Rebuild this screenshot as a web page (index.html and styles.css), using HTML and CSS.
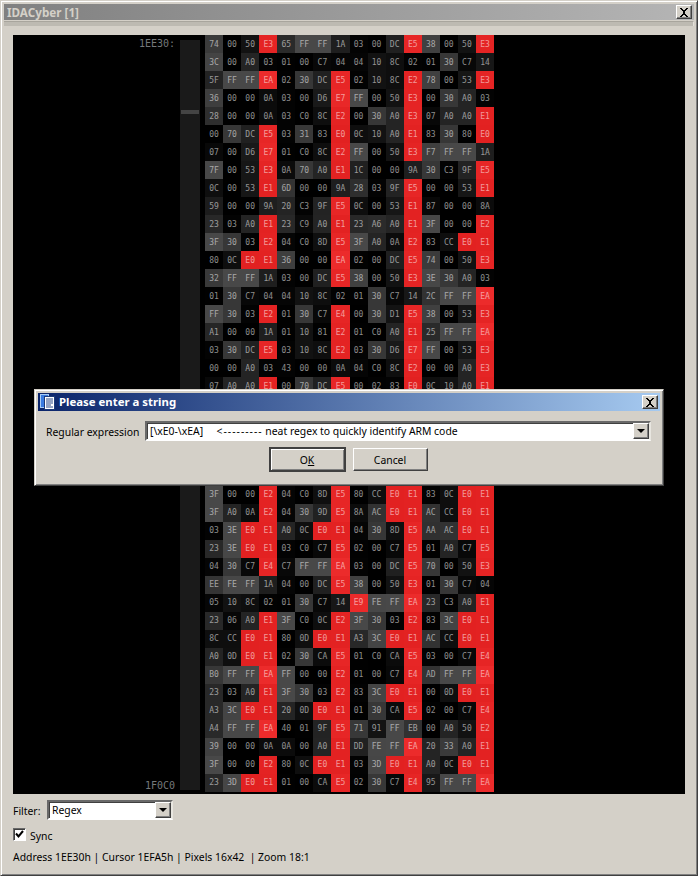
FILE: index.html
```html
<!DOCTYPE html>
<html lang="en">
  <head>
    <meta charset="UTF-8" />
    <title>IDACyber [1]</title>
    <link rel="stylesheet" href="styles.css">
  </head>
  <body>
    <div class="window">
      <div class="titlebar">
        <span class="title">IDACyber [1]</span>
        <span class="closebtn">
          <svg width="10" height="9" viewBox="0 0 10 9"><path d="M1 0h2v1h1v1h2V1h1V0h2v1H8v1H7v1H6v3h1v1h1v1h1v1H7V8H6V7H4v1H3v1H1V8h1V7h1V6h1V3H3V2H2V1H1z"/></svg>
        </span>
      </div>
      <div class="tabstrip"></div>

      <div class="content">
        <div class="canvas">
          <div class="labels">
            <span>1EE30:</span>
            <span>1F0C0</span>
          </div>
          <div class="strip"><div class="handle"></div></div>
          <div id="hexgrid" class="hexgrid"></div>
        </div>

        <div class="filter-row">
          <label class="filter-label">Filter:</label>
          <div class="combo combo-small">
            <span class="combo-text">Regex</span>
            <span class="combo-btn"><i class="arrow"></i></span>
          </div>
        </div>

        <div class="sync-row">
          <span class="checkbox">
            <svg width="9" height="9" viewBox="0 0 9 9"><path d="M1 3.5 3.5 6.5 8 1" fill="none" stroke="#000" stroke-width="2"/></svg>
          </span>
          <label class="sync-label">Sync</label>
        </div>

        <div class="status">Address 1EE30h | Cursor 1EFA5h | Pixels 16x42  | Zoom 18:1</div>
      </div>

      <div class="dialog">
        <div class="dialog-title">
          <svg class="dialog-icon" width="16" height="16" viewBox="0 0 16 16">
            <rect x="0.5" y="0.5" width="8" height="13" fill="#3a7be0" stroke="#a8ccf4"/>
            <rect x="4.5" y="2.5" width="10" height="13" fill="#fff" stroke="#1c3a78"/>
            <path d="M6 5h7M6 7h7M6 9h7M6 11h5M6 13h7" stroke="#2c4a88"/>
          </svg>
          <span class="dialog-caption">Please enter a string</span>
          <span class="closebtn closebtn-dialog">
            <svg width="10" height="9" viewBox="0 0 10 9"><path d="M1 0h2v1h1v1h2V1h1V0h2v1H8v1H7v1H6v3h1v1h1v1h1v1H7V8H6V7H4v1H3v1H1V8h1V7h1V6h1V3H3V2H2V1H1z"/></svg>
          </span>
        </div>
        <div class="dialog-row">
          <label class="dialog-label">Regular expression</label>
          <div class="combo combo-wide">
            <span class="combo-text">[\xE0-\xEA]     <span class="dashes">&lt;---------</span> neat regex to quickly identify ARM code</span>
            <span class="combo-btn"><i class="arrow"></i></span>
          </div>
        </div>
        <div class="dialog-buttons">
          <button class="btn btn-default">O<u>K</u></button>
          <button class="btn">Cancel</button>
        </div>
      </div>
    </div>

    <script>
      var rows = [
        "74 00 50 E3 65 FF FF 1A 03 00 DC E5 38 00 50 E3",
        "3C 00 A0 03 01 00 C7 04 04 10 8C 02 01 30 C7 14",
        "5F FF FF EA 02 30 DC E5 02 10 8C E2 78 00 53 E3",
        "36 00 00 0A 03 00 D6 E7 FF 00 50 E3 00 30 A0 03",
        "28 00 00 0A 03 C0 8C E2 00 30 A0 E3 07 A0 A0 E1",
        "00 70 DC E5 03 31 83 E0 0C 10 A0 E1 83 30 80 E0",
        "07 00 D6 E7 01 C0 8C E2 FF 00 50 E3 F7 FF FF 1A",
        "7F 00 53 E3 0A 70 A0 E1 1C 00 00 9A 30 C3 9F E5",
        "0C 00 53 E1 6D 00 00 9A 28 03 9F E5 00 00 53 E1",
        "59 00 00 9A 20 C3 9F E5 0C 00 53 E1 87 00 00 8A",
        "23 03 A0 E1 23 C9 A0 E1 23 A6 A0 E1 3F 00 00 E2",
        "3F 30 03 E2 04 C0 8D E5 3F A0 0A E2 83 CC E0 E1",
        "80 0C E0 E1 36 00 00 EA 02 00 DC E5 74 00 50 E3",
        "32 FF FF 1A 03 00 DC E5 38 00 50 E3 3E 30 A0 03",
        "01 30 C7 04 04 10 8C 02 01 30 C7 14 2C FF FF EA",
        "FF 30 03 E2 01 30 C7 E4 00 30 D1 E5 38 00 53 E3",
        "A1 00 00 1A 01 10 81 E2 01 C0 A0 E1 25 FF FF EA",
        "03 30 DC E5 03 10 8C E2 03 30 D6 E7 FF 00 53 E3",
        "00 00 A0 03 43 00 00 0A 04 C0 8C E2 00 00 A0 E3",
        "07 A0 A0 E1 00 70 DC E5 00 02 83 E0 0C 10 A0 E1",
        "83 30 80 E0 07 00 D6 E7 01 C0 8C E2 FF 00 53 E3",
        "00 00 A0 03 04 C0 8C E2 00 30 A0 E3 3F 00 00 E2",
        "23 03 A0 E1 23 C9 A0 E1 3F 30 03 E2 83 CC E0 E1",
        "04 C0 8D E5 80 0C E0 E1 02 00 DC E5 74 00 50 E3",
        "23 A6 A0 E1 3F A0 0A E2 00 30 D1 E5 38 00 53 E3",
        "3F 00 00 E2 04 C0 8D E5 80 CC E0 E1 83 0C E0 E1",
        "3F A0 0A E2 04 30 9D E5 8A AC E0 E1 AC CC E0 E1",
        "03 3E E0 E1 A0 0C E0 E1 04 30 8D E5 AA AC E0 E1",
        "23 3E E0 E1 03 C0 C7 E5 02 00 C7 E5 01 A0 C7 E5",
        "04 30 C7 E4 C7 FF FF EA 03 00 DC E5 70 00 50 E3",
        "EE FE FF 1A 04 00 DC E5 38 00 50 E3 01 30 C7 04",
        "05 10 8C 02 01 30 C7 14 E9 FE FF EA 23 C3 A0 E1",
        "23 06 A0 E1 3F C0 0C E2 3F 30 03 E2 83 3C E0 E1",
        "8C CC E0 E1 80 0D E0 E1 A3 3C E0 E1 AC CC E0 E1",
        "A0 0D E0 E1 02 30 CA E5 01 C0 CA E5 03 00 C7 E4",
        "B0 FF FF EA FF 00 00 E2 01 00 C7 E4 AD FF FF EA",
        "23 03 A0 E1 3F 30 03 E2 83 3C E0 E1 00 0D E0 E1",
        "A3 3C E0 E1 20 0D E0 E1 01 30 CA E5 02 00 C7 E4",
        "A4 FF FF EA 40 01 9F E5 71 91 FF EB 00 A0 50 E2",
        "39 00 00 0A 0A 00 A0 E1 DD FE FF EA 20 33 A0 E1",
        "3F 00 00 E2 80 0C E0 E1 03 3D E0 E1 A0 0C E0 E1",
        "23 3D E0 E1 01 00 CA E5 02 30 C7 E4 95 FF FF EA"
      ];

      var grid = document.getElementById("hexgrid");

      // gray level comes from the low 6 bits, regex matches (E0-EA) go red
      rows.forEach(function (row) {
        row.split(" ").forEach(function (hex) {
          var value = parseInt(hex, 16);
          var cell = document.createElement("div");
          cell.className = "cell";
          cell.textContent = hex;
          if (value >= 0xe0 && value <= 0xea) {
            var step = value - 0xe0;
            var g = 33 + step;
            cell.style.background = "rgb(" + (226 + step) + "," + g + "," + g + ")";
          } else {
            var c = Math.round((value & 0x3f) * 1.14);
            cell.style.background = "rgb(" + c + "," + c + "," + c + ")";
          }
          grid.appendChild(cell);
        });
      });
    </script>
  </body>
</html>
```

FILE: styles.css
```css
html,
body {
  margin: 0;
  padding: 0;
  background-color: #d4d0c8;
}

body {
  width: 698px;
  height: 876px;
  overflow: hidden;
  font-family: "Noto Sans", sans-serif;
  font-size: 10.4px;
  color: #000;
}

label {
  display: block;
}

.window {
  position: relative;
  box-sizing: border-box;
  width: 698px;
  height: 876px;
  padding: 3px;
  border: 1px solid;
  border-color: #d4d0c8 #404040 #404040 #d4d0c8;
  box-shadow: inset 1px 1px 0 #fff, inset -1px -1px 0 #808080;
}

.titlebar {
  display: flex;
  align-items: center;
  justify-content: space-between;
  height: 16px;
  padding: 0 2px 0 3px;
  background: linear-gradient(to right, #808080, #b5b5b5);
}

.title {
  margin-top: -1px;
  font-weight: bold;
  font-size: 11.7px;
  color: #d4d0c8;
}

.closebtn {
  display: flex;
  align-items: center;
  justify-content: center;
  box-sizing: border-box;
  width: 16px;
  height: 14px;
  background-color: #d4d0c8;
  border: 1px solid;
  border-color: #fff #404040 #404040 #fff;
  box-shadow: inset -1px -1px 0 #808080;
}

.tabstrip {
  box-sizing: border-box;
  height: 5px;
  margin-top: 1px;
  background-color: #bdbab2;
  border-top: 1px solid #a8a59d;
  border-right: 1px solid #e4e1da;
}

.content {
  padding: 9px 9px 0;
}

.canvas {
  display: flex;
  gap: 5px;
  height: 759px;
  background-color: #000;
}

.labels {
  display: flex;
  flex-direction: column;
  justify-content: space-between;
  align-items: flex-end;
  box-sizing: border-box;
  width: 162px;
  height: 757px;
  padding: 3px 0 1px;
  font-family: "DejaVu Sans Mono", monospace;
  font-size: 10px;
  color: #75787a;
}

.strip {
  box-sizing: border-box;
  width: 20px;
  height: 750px;
  margin-top: 5px;
  padding: 70px 1px 0;
  background-color: #1a1a1a;
}

.handle {
  height: 4px;
  background-color: #444;
}

.hexgrid {
  display: grid;
  grid-template-columns: repeat(16, 1fr);
  grid-template-rows: repeat(42, 1fr);
  width: 289px;
  height: 757px;
}

.cell {
  display: flex;
  align-items: center;
  justify-content: center;
  font-family: "DejaVu Sans Mono", monospace;
  font-size: 8px;
  color: rgba(255, 255, 255, 0.55);
}

.filter-row {
  display: flex;
  align-items: center;
  margin-top: 6px;
}

.filter-label {
  width: 34px;
  padding-top: 2px;
}

.combo {
  display: flex;
  align-items: center;
  justify-content: space-between;
  box-sizing: border-box;
  height: 20px;
  background-color: #fff;
  border: 2px solid;
  border-color: #696969 #e8e6e0 #fff #696969;
  box-shadow: inset 1px 1px 0 #404040;
}

.combo-small {
  width: 126px;
}

.combo-wide {
  width: 506px;
}

.combo-text {
  padding-left: 3px;
  white-space: pre;
}

.dashes {
  letter-spacing: 1px;
}

.combo-btn {
  display: flex;
  align-items: center;
  justify-content: center;
  box-sizing: border-box;
  width: 16px;
  height: 16px;
  background-color: #d4d0c8;
  border: 1px solid;
  border-color: #fff #404040 #404040 #fff;
  box-shadow: inset -1px -1px 0 #808080;
}

.arrow {
  width: 0;
  height: 0;
  border-left: 4px solid transparent;
  border-right: 4px solid transparent;
  border-top: 4px solid #000;
}

.sync-row {
  display: flex;
  align-items: center;
  gap: 4px;
  height: 13px;
  margin-top: 8px;
}

.sync-label {
  padding-top: 3px;
}

.checkbox {
  display: flex;
  align-items: center;
  justify-content: center;
  box-sizing: border-box;
  width: 13px;
  height: 13px;
  background-color: #fff;
  border: 1px solid;
  border-color: #696969 #fff #fff #696969;
  box-shadow: inset 1px 1px 0 #404040;
}

.status {
  margin-top: 9px;
  white-space: pre;
}

.dialog {
  position: absolute;
  left: 33px;
  top: 388px;
  box-sizing: border-box;
  width: 630px;
  height: 97px;
  padding: 3px;
  background-color: #d4d0c8;
  border: 1px solid;
  border-color: #d4d0c8 #404040 #404040 #d4d0c8;
  box-shadow: inset 1px 1px 0 #fff, inset -1px -1px 0 #808080;
}

.dialog-title {
  display: flex;
  align-items: center;
  height: 18px;
  padding: 0 2px;
  background: linear-gradient(to right, #0a246a, #a6caf0);
}

.dialog-icon {
  flex: none;
  margin-right: 3px;
}

.dialog-caption {
  flex: 1;
  margin-top: -1px;
  font-weight: bold;
  font-size: 11.4px;
  color: #fff;
}

.dialog-row {
  display: flex;
  align-items: center;
  margin: 10px 0 0 8px;
}

.dialog-label {
  flex: none;
  width: 99px;
  padding-top: 1px;
  white-space: nowrap;
}

.dialog-buttons {
  display: flex;
  justify-content: center;
  align-items: center;
  gap: 7px;
  margin-top: 6px;
  padding-right: 2px;
}

.btn {
  box-sizing: border-box;
  width: 75px;
  height: 23px;
  padding: 0;
  font-family: "Noto Sans", sans-serif;
  font-size: 10.4px;
  color: #000;
  background-color: #d4d0c8;
  border: 1px solid;
  border-color: #fff #404040 #404040 #fff;
  box-shadow: inset -1px -1px 0 #808080;
}

.btn-default {
  width: 77px;
  height: 25px;
  border: 2px solid;
  border-color: #404040;
  box-shadow: inset 1px 1px 0 #fff, inset -1px -1px 0 #808080;
}
```
